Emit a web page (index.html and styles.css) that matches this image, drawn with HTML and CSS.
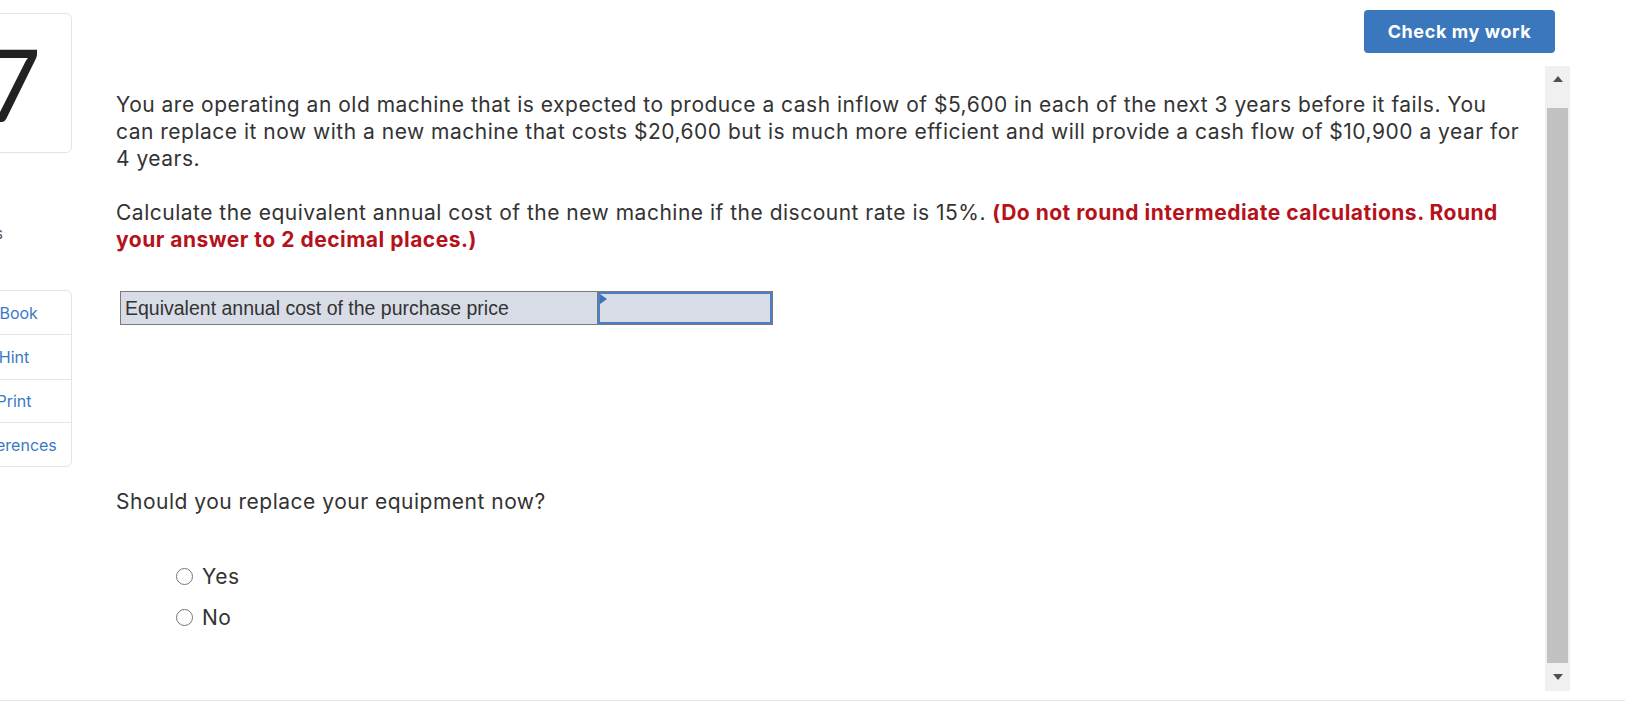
FILE: index.html
```html
<!DOCTYPE html>
<html lang="en">
<head>
<meta charset="utf-8">
<title>Question 7</title>
<link rel="stylesheet" href="styles.css">
</head>
<body>
<div class="page">
  <aside class="side">
    <div class="qnum">7</div>
    <div class="pts">points</div>
    <ul class="tools">
      <li>eBook</li>
      <li>Hint</li>
      <li>Print</li>
      <li>References</li>
    </ul>
  </aside>
  <main class="main">
    <header class="top">
      <button class="check" type="button">Check my work</button>
    </header>
    <div class="body">
      <div class="content">
        <p>You are operating an old machine that is expected to produce a cash inflow of $5,600 in each of the next 3 years before it fails. You can replace it now with a new machine that costs $20,600 but is much more efficient and will provide a cash flow of $10,900 a year for 4 years.</p>
        <p>Calculate the equivalent annual cost of the new machine if the discount rate is 15%. <strong class="note">(Do not round intermediate calculations. Round your answer to 2 decimal places.)</strong></p>
        <div class="ans">
          <div class="ans-label">Equivalent annual cost of the purchase price</div>
          <div class="ans-input"></div>
        </div>
        <p class="q2">Should you replace your equipment now?</p>
        <ul class="radios">
          <li><span class="radio"></span>Yes</li>
          <li><span class="radio"></span>No</li>
        </ul>
      </div>
      <div class="scrollbar">
        <div class="sb-btn"><span class="tri-up"></span></div>
        <div class="sb-track"><div class="sb-thumb"></div></div>
        <div class="sb-btn down"><span class="tri-down"></span></div>
      </div>
    </div>
  </main>
</div>
</body>
</html>
```

FILE: styles.css
```css
* { box-sizing: border-box; }
html, body { margin: 0; padding: 0; }
body {
  font-family: Inter, Lato, "Liberation Sans", sans-serif;
  color: #333;
  background: #fff;
  width: 1625px;
  height: 707px;
  overflow: hidden;
}
.page {
  display: flex;
  height: 701px;
  border-bottom: 1px solid #e6e6e6;
}
.side {
  flex: 0 0 116px;
  margin-left: -44px;
  display: flex;
  flex-direction: column;
}
.qnum {
  margin-top: 13px;
  height: 140px;
  border: 1px solid #e4e4e4;
  border-radius: 6px;
  display: flex;
  align-items: center;
  justify-content: center;
  padding-right: 4px;
  font-family: Lato, Inter, sans-serif;
  font-size: 100px;
  line-height: 1;
  color: #222;
}
.pts {
  margin-top: 71px;
  width: 47px;
  height: 20px;
  line-height: 20px;
  font-size: 15px;
  color: #555;
  text-align: right;
}
.tools {
  list-style: none;
  margin: 46px 0 0;
  padding: 0;
  border: 1px solid #e4e4e4;
  border-radius: 6px;
}
.tools li {
  display: flex;
  align-items: center;
  justify-content: center;
  font-size: 16px;
  color: #3b78c4;
  border-top: 1px solid #e4e4e4;
}
.tools li:nth-child(1) { border-top: 0; height: 43px; }
.tools li:nth-child(2) { height: 45px; }
.tools li:nth-child(3) { height: 43px; }
.tools li:nth-child(4) { height: 44px; }
.main {
  flex: 1;
  min-width: 0;
  display: flex;
  flex-direction: column;
}
.top {
  height: 66px;
  display: flex;
  justify-content: flex-end;
  align-items: flex-start;
  padding: 10px 70px 0 0;
}
.check {
  width: 191px;
  height: 43px;
  background: #3a77bd;
  color: #fff;
  border: 0;
  border-radius: 4px;
  font-family: Inter, Lato, sans-serif;
  font-weight: 700;
  font-size: 18px;
  letter-spacing: 0.6px;
  padding: 0;
}
.body {
  display: flex;
  height: 625px;
}
.content {
  flex: 1;
  min-width: 0;
  padding: 25px 19px 0 44px;
  font-size: 21px;
  line-height: 27px;
  letter-spacing: 0.5px;
}
.content p { margin: 0 0 27px; }
.note { color: #b5121b; font-weight: 700; }
.ans {
  margin: 38px 0 0 4px;
  width: 653px;
  height: 34px;
  display: flex;
  border: 1px solid #7a7a7a;
  background: #d8dce7;
}
.ans-label {
  width: 477px;
  border-right: 1px solid #7a7a7a;
  padding-left: 4px;
  display: flex;
  align-items: center;
  font-family: "Liberation Sans", Arial, sans-serif;
  font-size: 19.5px;
  letter-spacing: 0;
  color: #333;
}
.ans-input {
  flex: 1;
  position: relative;
  border: 2px solid #4a7fc4;
}
.ans-input::before {
  content: "";
  position: absolute;
  top: 0;
  left: 0;
  border-left: 7px solid #3a72c0;
  border-top: 5px solid transparent;
  border-bottom: 5px solid transparent;
}
.content p.q2 { margin: 163px 0 0; }
.radios {
  list-style: none;
  margin: 41px 0 0 60px;
  padding: 0;
}
.radios li {
  height: 41px;
  display: flex;
  align-items: center;
  gap: 9px;
}
.radio {
  width: 17px;
  height: 17px;
  border: 1px solid #767676;
  border-radius: 50%;
  background: #fff;
}
.scrollbar {
  flex: 0 0 25px;
  margin-right: 55px;
  background: #f0f0f0;
  display: flex;
  flex-direction: column;
}
.sb-btn {
  height: 26px;
  display: flex;
  align-items: center;
  justify-content: center;
}
.sb-btn.down { height: 28px; }
.tri-up {
  width: 0; height: 0;
  border-left: 5.5px solid transparent;
  border-right: 5.5px solid transparent;
  border-bottom: 6px solid #505050;
}
.tri-down {
  width: 0; height: 0;
  border-left: 5.5px solid transparent;
  border-right: 5.5px solid transparent;
  border-top: 6px solid #505050;
}
.sb-track {
  flex: 1;
  padding: 16px 2px 0;
  display: flex;
}
.sb-thumb { flex: 1; background: #c1c1c1; }
```
